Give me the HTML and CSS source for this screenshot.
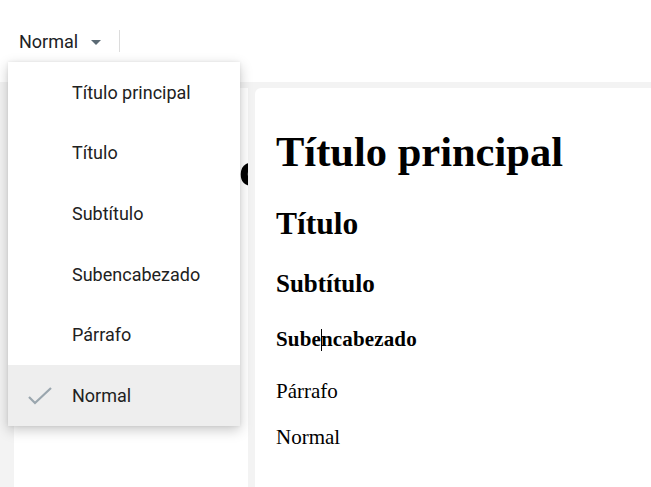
FILE: index.html
```html
<!DOCTYPE html>
<html lang="es">
  <head>
    <meta charset="UTF-8" />
    <meta name="viewport" content="width=device-width, initial-scale=1.0" />
    <title>Editor</title>
    <link rel="stylesheet" href="styles.css">
  </head>
  <body>
    <div class="toolbar">
      <div class="style-btn">
        <span>Normal</span>
        <svg class="arrow" width="10" height="5" viewBox="0 0 10 5">
          <path d="M0 0h10L5 5z" fill="#5b6a74" />
        </svg>
      </div>
      <div class="divider"></div>
    </div>

    <div class="workspace">
      <div class="side">
        <div class="side-title">c</div>
      </div>
      <div class="page">
        <h1>Título principal</h1>
        <h2>Título</h2>
        <h3>Subtítulo</h3>
        <h4>Sube<span class="cursor"></span>ncabezado</h4>
        <p class="para">Párrafo</p>
        <p class="normal">Normal</p>
      </div>
    </div>

    <ul class="menu">
      <li>Título principal</li>
      <li>Título</li>
      <li>Subtítulo</li>
      <li>Subencabezado</li>
      <li>Párrafo</li>
      <li class="selected">
        <svg class="check" width="26" height="20" viewBox="0 0 26 20">
          <path d="M2 11l6 6L24 2" fill="none" stroke="#9aa6ae" stroke-width="2.2" />
        </svg>
        Normal
      </li>
    </ul>
  </body>
</html>
```
FILE: styles.css
```css
body {
  margin: 0;
  background-color: #f3f3f3;
  font-family: Roboto, "Noto Sans", sans-serif;
  height: 487px;
  overflow: hidden;
}

.toolbar {
  height: 82px;
  background-color: #fff;
  display: flex;
  align-items: center;
  padding-left: 19px;
}

.style-btn {
  display: flex;
  align-items: center;
  font-size: 18px;
  color: #202124;
}

.arrow {
  margin-left: 13px;
  margin-top: 2px;
}

.divider {
  width: 1px;
  height: 22px;
  background-color: #dcdcdc;
  margin-left: 18px;
}

.workspace {
  display: flex;
  gap: 7px;
  padding: 6px 0 0 14px;
  height: 399px;
}

.side {
  width: 234px;
  background-color: #fff;
  overflow: hidden;
}

.side-title {
  font-family: "Liberation Serif", serif;
  font-weight: bold;
  font-size: 50px;
  line-height: 50px;
  white-space: nowrap;
  padding: 56px 0 0 225px;
}

.page {
  flex: 1;
  background-color: #fff;
  border-top-left-radius: 6px;
  padding: 38px 0 0 21px;
  font-family: "Liberation Serif", serif;
  color: #000;
}

.page h1,
.page h2,
.page h3,
.page h4,
.page p {
  margin: 0;
  line-height: 1.2;
}

.page h1 {
  font-size: 42.5px;
}

.page h2 {
  font-size: 31.5px;
  margin-top: 28px;
}

.page h3 {
  font-size: 25px;
  margin-top: 26px;
}

.page h4 {
  font-size: 21px;
  margin-top: 28px;
  letter-spacing: 0.15px;
}

.cursor {
  display: inline-block;
  width: 1px;
  height: 22px;
  background-color: #000;
  margin-right: -1px;
  vertical-align: -5px;
}

.page .para {
  font-size: 21px;
  margin-top: 27px;
}

.page .normal {
  font-size: 21px;
  margin-top: 21px;
}

.menu {
  position: absolute;
  left: 8px;
  top: 62px;
  width: 232px;
  margin: 0;
  padding: 0;
  list-style: none;
  background-color: #fff;
  box-shadow: 0 4px 12px rgba(0, 0, 0, 0.22), 0 0 3px rgba(0, 0, 0, 0.08);
}

.menu li {
  height: 60.6px;
  display: flex;
  align-items: center;
  padding-left: 64px;
  font-size: 18px;
  color: #212121;
  position: relative;
}

.menu .selected {
  background-color: #eeeeee;
}

.check {
  position: absolute;
  left: 19px;
  top: 21px;
}
```
